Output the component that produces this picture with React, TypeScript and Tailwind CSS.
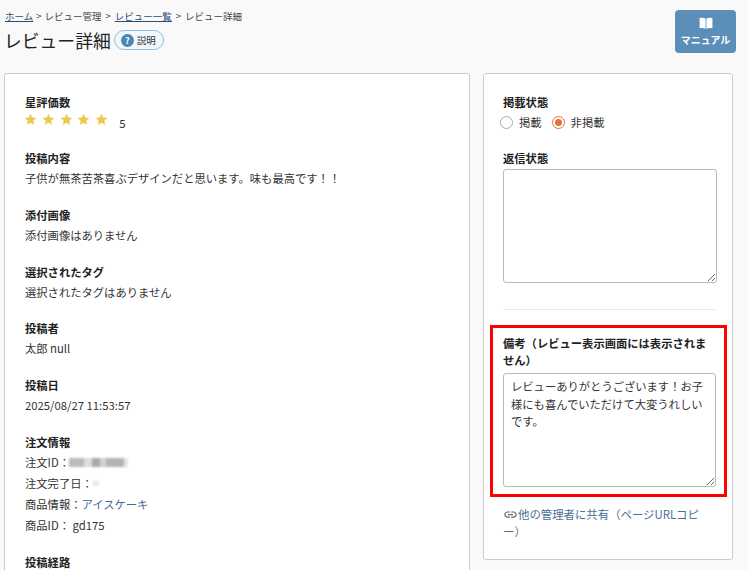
import { MdLink } from "react-icons/md";

function Star() {
  return (
    <svg viewBox="0 0 24 24" className="w-[13px] h-[13px] fill-[#ecc94b]">
      <path d="M12 1.500l3.200 7 7.600.8-5.700 5.100 1.600 7.500L12 18l-6.700 3.900 1.600-7.500L1.200 9.300l7.600-.8z" />
    </svg>
  );
}

function Field({ label, children }: { label: string; children: React.ReactNode }) {
  return (
    <div className="mb-[14.850px]">
      <div className="font-bold text-[11.3px] h-[21px] leading-[23px] text-[#222]">{label}</div>
      {children}
    </div>
  );
}

function Area({ h, text }: { h: string; text?: string }) {
  return (
    <textarea
      readOnly
      value={text ?? ""}
      className={`block w-full ${h} border border-[#bbb] rounded-[3px] bg-white px-[7px] py-[4px] text-[11.3px] leading-[17.500px] text-[#333] resize-y outline-none`}
    />
  );
}

export default function App() {
  return (
    <div
      className="h-[570px] w-[748px] overflow-hidden bg-[#f9f9f9] text-[11.3px] leading-[21px] text-[#333]"
      style={{ fontFamily: '"Noto Sans CJK JP", "Noto Sans", sans-serif' }}
    >
      <div className="flex justify-between pl-[5px] pr-[12px] pt-[9px] h-[73px]">
        <div>
          <div className="flex items-center gap-[4px] text-[9.500px] leading-[14px] text-[#444]">
            <span className="underline text-[#2f4b73]">ホーム</span>
            <span className="-mx-[1px]">&gt;</span>
            <span>レビュー管理</span>
            <span>&gt;</span>
            <span className="underline text-[#2f4b73]">レビュー一覧</span>
            <span>&gt;</span>
            <span>レビュー詳細</span>
          </div>
          <div className="flex items-center gap-[3px] mt-[3px] -ml-[1px]">
            <h1 className="text-[17.800px] leading-[28px] font-normal text-[#222]">レビュー詳細</h1>
            <div className="flex items-center gap-[3px] h-[20px] w-[50px] rounded-full border border-[#90bfe0] bg-[#f2f7fb] pl-[6px] text-[9.500px] text-[#333]">
              <span className="w-[13px] h-[13px] rounded-full bg-[#4a86b5] text-white flex items-center justify-center text-[9px] font-bold">?</span>
              説明
            </div>
          </div>
        </div>
        <div className="w-[61px] h-[43px] mt-[1px] rounded-[4px] bg-[#5b8eb8] flex flex-col items-center justify-center text-white text-[10px] leading-[14px] font-bold">
          <svg viewBox="0 0 24 24" className="w-[14px] h-[14px] fill-white mb-[3px]">
            <path d="M1 3.500c4-1 8-.7 10.300 1V22c-2.800-1.600-6.500-1.900-10.300-1zM23 3.500c-4-1-8-.7-10.300 1V22c2.800-1.600 6.500-1.900 10.300-1z" />
          </svg>
          マニュアル
        </div>
      </div>

      <div className="flex items-start pl-[4px] gap-[13px]">
        <div className="w-[466px] h-[600px] shrink-0 bg-white border border-[#ccc] rounded-[3px] pl-[20px] pt-[17px]">
          <Field label="星評価数">
            <div className="flex items-start h-[20px] -ml-[1px]">
              <div className="flex gap-[4.800px] mt-[1px]">
                <Star />
                <Star />
                <Star />
                <Star />
                <Star />
              </div>
              <span className="ml-[11px] mt-[1px]">5</span>
            </div>
          </Field>
          <Field label="投稿内容">
            <div>子供が無茶苦茶喜ぶデザインだと思います。味も最高です！！</div>
          </Field>
          <Field label="添付画像">
            <div>添付画像はありません</div>
          </Field>
          <Field label="選択されたタグ">
            <div>選択されたタグはありません</div>
          </Field>
          <Field label="投稿者">
            <div>太郎 null</div>
          </Field>
          <Field label="投稿日">
            <div>2025/08/27 11:53:57</div>
          </Field>
          <Field label="注文情報">
            <div className="flex items-center">
              注文ID：
              <span className="flex h-[9px] blur-[1px] -ml-[1px]">
                <span className="w-[15px] bg-[#bbb]" />
                <span className="w-[8px] bg-[#ddd]" />
                <span className="w-[8px] bg-[#aaa]" />
                <span className="w-[6px] bg-[#d8d0c8]" />
                <span className="w-[18px] bg-[#b4b4b4]" />
                <span className="w-[4px] bg-[#e6e6e6]" />
              </span>
            </div>
            <div className="flex items-center">
              注文完了日：
              <span className="w-[6px] h-[5px] bg-[#e8e8e8] blur-[1px]" />
            </div>
            <div>
              商品情報：<span className="text-[#3f6a94]">アイスケーキ</span>
            </div>
            <div>商品ID： gd175</div>
          </Field>
          <Field label="投稿経路">
            <div />
          </Field>
        </div>

        <div className="w-[250px] h-[487px] shrink-0 bg-white border border-[#ccc] rounded-[3px] pl-[19px] pr-[15px] pt-[18px]">
          <div>
            <div className="font-bold text-[#222]">掲載状態</div>
            <div className="flex items-center gap-[10px] -ml-[3px] h-[17px] mt-[1px]">
              <label className="flex items-center gap-[6px]">
                <span className="w-[13px] h-[13px] rounded-full border border-[#aaa] bg-white" />
                掲載
              </label>
              <label className="flex items-center gap-[6px]">
                <span className="w-[13px] h-[13px] rounded-full border border-[#e8703e] bg-white flex items-center justify-center">
                  <span className="w-[7px] h-[7px] rounded-full bg-[#e8703e]" />
                </span>
                非掲載
              </label>
            </div>
          </div>
          <div className="mt-[17px]">
            <div className="font-bold text-[#222]">返信状態</div>
            <Area h="h-[114px]" />
          </div>
          <div className="border-t border-[#e8e8e8] mt-[26px] w-[213px]" />
          <div className="relative mt-[25px] w-[213px]">
            <div className="absolute -left-[13px] -right-[11px] -top-[10px] h-[172px] border-[3px] border-[#ff0000] pointer-events-none" />
            <div className="font-bold text-[#222] leading-[17px]">備考（レビュー表示画面には表示されません）</div>
            <div className="mt-[4px]">
              <Area h="h-[114px]" text="レビューありがとうございます！お子様にも喜んでいただけて大変うれしいです。" />
            </div>
          </div>
          <div className="mt-[19px] w-[200px] text-[11.400px] text-[#4a6f96] leading-[17px]">
            <MdLink className="inline w-[15px] h-[15px] text-[#666] align-[-3px]" />
            他の管理者に共有（ページURLコピー）
          </div>
        </div>
      </div>
    </div>
  );
}
